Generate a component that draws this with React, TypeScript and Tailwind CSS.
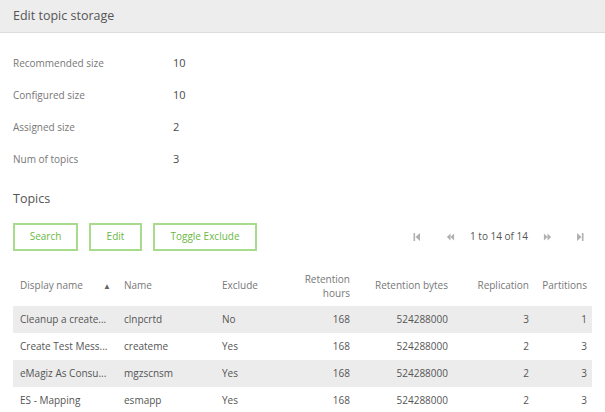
const stats = [
  { label: 'Recommended size', value: '10' },
  { label: 'Configured size', value: '10' },
  { label: 'Assigned size', value: '2' },
  { label: 'Num of topics', value: '3' },
]

const rows = [
  { display: 'Cleanup a create...', name: 'clnpcrtd', exclude: 'No', hours: 168, bytes: 524288000, repl: 3, parts: 1 },
  { display: 'Create Test Mess...', name: 'createme', exclude: 'Yes', hours: 168, bytes: 524288000, repl: 2, parts: 3 },
  { display: 'eMagiz As Consu...', name: 'mgzscnsm', exclude: 'Yes', hours: 168, bytes: 524288000, repl: 2, parts: 3 },
  { display: 'ES - Mapping', name: 'esmapp', exclude: 'Yes', hours: 168, bytes: 524288000, repl: 2, parts: 3 },
]

function DoubleLeft() {
  return (
    <svg width="9" height="10" viewBox="0 0 10 10" fill="currentColor">
      <path d="M5 1v8L1 5z M9 1v8L5 5z" />
    </svg>
  )
}

function DoubleRight() {
  return (
    <svg width="9" height="10" viewBox="0 0 10 10" fill="currentColor">
      <path d="M1 1v8l4-4z M5 1v8l4-4z" />
    </svg>
  )
}

function FirstIcon() {
  return (
    <svg width="8" height="10" viewBox="0 0 8 10" fill="currentColor">
      <rect x="0.5" y="1" width="1.6" height="8" />
      <path d="M7 1v8L2.5 5z" />
    </svg>
  )
}

function LastIcon() {
  return (
    <svg width="8" height="10" viewBox="0 0 8 10" fill="currentColor">
      <path d="M1 1v8l4.5-4z" />
      <rect x="5.9" y="1" width="1.6" height="8" />
    </svg>
  )
}

export default function App() {
  return (
    <div className="w-[605px] h-[412px] overflow-hidden bg-white text-[#555]" style={{ fontFamily: '"Open Sans", "Noto Sans", sans-serif' }}>
      {/* header */}
      <div className="h-[33px] bg-[#ededed] border-b border-[#dcdcdc] flex items-center px-[13px]">
        <span className="text-[12.5px] text-[#555]">Edit topic storage</span>
      </div>

      {/* stats */}
      <div className="px-[13px] pt-[21px] flex flex-col gap-[13px]">
        {stats.map((s) => (
          <div key={s.label} className="flex items-center h-[19px]">
            <span className="w-[160px] text-[10px] text-[#777]">{s.label}</span>
            <span className="text-[11px] text-[#4a4a4a]">{s.value}</span>
          </div>
        ))}
      </div>

      <div className="px-[13px] mt-[24px] text-[12.5px] text-[#555] leading-none">Topics</div>

      {/* toolbar */}
      <div className="flex items-center px-[13px] mt-[17px]">
        <div className="flex gap-[11px]">
          <button className="h-[28px] w-[65px] border-2 border-[#a6dc8c] text-[10px] text-[#6bb745]">Search</button>
          <button className="h-[28px] w-[53px] border-2 border-[#a6dc8c] text-[10px] text-[#6bb745]">Edit</button>
          <button className="h-[28px] w-[104px] border-2 border-[#a6dc8c] text-[10px] text-[#6bb745]">Toggle Exclude</button>
        </div>
        <div className="ml-auto flex items-center text-[#b0b0b0] pr-[8px]">
          <FirstIcon />
          <span className="w-[25px]" />
          <DoubleLeft />
          <span className="ml-[15px] mr-[15px] text-[10px] text-[#555]">1 to 14 of 14</span>
          <DoubleRight />
          <span className="w-[24px]" />
          <LastIcon />
        </div>
      </div>

      {/* table */}
      <div className="px-[13px] mt-[15px]">
        <table className="w-[579px] table-fixed border-collapse text-[10px]">
          <colgroup>
            <col className="w-[104px]" />
            <col className="w-[98px]" />
            <col className="w-[75px]" />
            <col className="w-[66px]" />
            <col className="w-[99px]" />
            <col className="w-[81px]" />
            <col className="w-[56px]" />
          </colgroup>
          <thead>
            <tr className="h-[40px] text-[#777]">
              <th className="font-normal text-left pl-[7px]">
                <div className="flex items-center justify-between pr-[6px]">
                  <span>Display name</span>
                  <span className="text-[8px] text-[#666]">▲</span>
                </div>
              </th>
              <th className="font-normal text-left pl-[7px]">Name</th>
              <th className="font-normal text-left pl-[7px]">Exclude</th>
              <th className="font-normal text-right pr-[6px] leading-[14px]">Retention<br />hours</th>
              <th className="font-normal text-right pr-[7px]">Retention bytes</th>
              <th className="font-normal text-right pr-[7px]">Replication</th>
              <th className="font-normal text-right pr-[5px]">Partitions</th>
            </tr>
          </thead>
          <tbody className="text-[#555]">
            {rows.map((r, i) => (
              <tr key={r.name} className={i % 2 === 0 ? 'h-[27px] bg-[#ececec]' : 'h-[27px]'}>
                <td className="pl-[7px] whitespace-nowrap">{r.display}</td>
                <td className="pl-[7px]">{r.name}</td>
                <td className="pl-[7px]">{r.exclude}</td>
                <td className="text-right pr-[6px]">{r.hours}</td>
                <td className="text-right pr-[7px]">{r.bytes}</td>
                <td className="text-right pr-[7px]">{r.repl}</td>
                <td className="text-right pr-[5px]">{r.parts}</td>
              </tr>
            ))}
          </tbody>
        </table>
      </div>
    </div>
  )
}
